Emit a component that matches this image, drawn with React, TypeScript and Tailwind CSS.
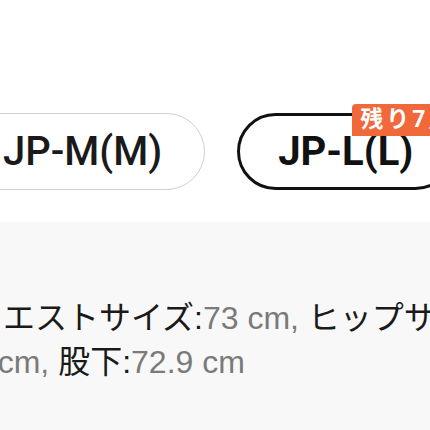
import React from 'react';

const sizes = [
  { label: 'JP-M(M)', selected: false },
  { label: 'JP-L(L)', selected: true, badge: '残り7点' },
];

export default function App() {
  return (
    <div
      className="w-[430px] h-[430px] overflow-hidden bg-white flex flex-col"
      style={{ fontFamily: '"Liberation Sans", "Noto Sans CJK JP", sans-serif' }}
    >
      <div className="h-[222px] shrink-0 pt-[113px]">
        <div className="flex gap-[32px] ml-[-40px]" style={{ fontFamily: 'Roboto, "Noto Sans CJK JP", sans-serif' }}>
          {sizes.map((s) => (
            <div
              key={s.label}
              className={
                s.selected
                  ? 'relative shrink-0 h-[77px] rounded-full border-[3px] border-[#111] px-[38px] flex items-center text-[40px] font-bold text-[#111]'
                  : 'relative shrink-0 h-[77px] rounded-full border-[1.5px] border-[#cfcfcf] px-[42px] flex items-center text-[40px] font-medium text-[#1a1a1a]'
              }
            >
              {s.label}
              {s.badge && (
                <span className="absolute top-[-12px] left-[112px] h-[32px] px-[8px] rounded-tl-[4px] rounded-br-[4px] bg-[#f1683b] text-white text-[23px] font-bold leading-[32px] whitespace-nowrap tracking-[3px]">
                  {s.badge}
                </span>
              )}
            </div>
          ))}
        </div>
      </div>
      <div className="flex-1 bg-[#f8f8f8] pt-[74px]">
        <div className="ml-[-29px] text-[32px] leading-[44px] whitespace-nowrap text-[#1a1a1a]">
          <div>
            ウエストサイズ:<span className="text-[#7a7a7a]">73 cm, </span>ヒップサイズ:
          </div>
          <div>
            <span className="text-[#7a7a7a]">9 cm, </span>股下:<span className="text-[#7a7a7a]">72.9 cm</span>
          </div>
        </div>
      </div>
    </div>
  );
}
